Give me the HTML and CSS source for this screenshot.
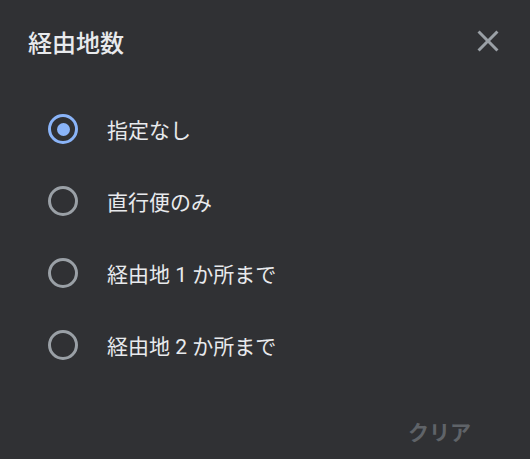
FILE: index.html
```html
<!DOCTYPE html>
<html lang="ja">
<head>
  <meta charset="UTF-8" />
  <title>経由地数</title>
  <link rel="stylesheet" href="styles.css">
</head>
<body>

  <div class="dialog">
    <div class="dialog-head">
      <h2>経由地数</h2>
      <button class="close-btn" aria-label="閉じる">
        <svg width="24" height="24" viewBox="0 0 24 24">
          <path d="M19 6.41L17.59 5 12 10.59 6.41 5 5 6.41 10.59 12 5 17.59 6.41 19 12 13.41 17.59 19 19 17.59 13.41 12z" fill="currentColor"/>
        </svg>
      </button>
    </div>

    <div class="options">
      <label class="option">
        <input type="radio" name="stops" checked />
        <span class="radio"></span>
        <span class="label">指定なし</span>
      </label>
      <label class="option">
        <input type="radio" name="stops" />
        <span class="radio"></span>
        <span class="label">直行便のみ</span>
      </label>
      <label class="option">
        <input type="radio" name="stops" />
        <span class="radio"></span>
        <span class="label">経由地 1 か所まで</span>
      </label>
      <label class="option">
        <input type="radio" name="stops" />
        <span class="radio"></span>
        <span class="label">経由地 2 か所まで</span>
      </label>
    </div>

    <div class="dialog-foot">
      <button class="clear-btn" disabled>クリア</button>
    </div>
  </div>

</body>
</html>
```

FILE: styles.css
```css
body {
  margin: 0;
  background-color: #303134;
  font-family: Roboto, "Noto Sans CJK JP", sans-serif;
  color: #e8eaed;
}
.dialog {
  width: 530px;
  height: 459px;
}
.dialog-head {
  display: flex;
  justify-content: space-between;
  align-items: center;
  padding: 25px 24px 0 28px;
  height: 32px;
}
.dialog-head h2 {
  margin: 0;
  font-size: 24px;
  font-weight: 500;
}
.close-btn {
  background: none;
  border: none;
  padding: 0;
  color: #9aa0a6;
  width: 36px;
  height: 36px;
  display: flex;
  align-items: center;
  justify-content: center;
}
.close-btn svg {
  width: 36px;
  height: 36px;
}
.options {
  padding: 36px 0 0 48px;
}
.option {
  display: flex;
  align-items: center;
  height: 72px;
  cursor: pointer;
}
.option input {
  display: none;
}
.radio {
  width: 24px;
  height: 24px;
  border: 3px solid #9aa0a6;
  border-radius: 50%;
  display: flex;
  align-items: center;
  justify-content: center;
  margin-right: 29px;
}
.option input:checked + .radio {
  border-color: #8ab4f8;
}
.option input:checked + .radio::after {
  content: "";
  width: 13px;
  height: 13px;
  border-radius: 50%;
  background: #8ab4f8;
}
.label {
  font-size: 21px;
}
.dialog-foot {
  display: flex;
  justify-content: flex-end;
  padding: 35px 59px 0 0;
}
.clear-btn {
  background: none;
  border: none;
  padding: 0;
  font-family: inherit;
  font-size: 21px;
  font-weight: 700;
  color: #5f6368;
}
```
